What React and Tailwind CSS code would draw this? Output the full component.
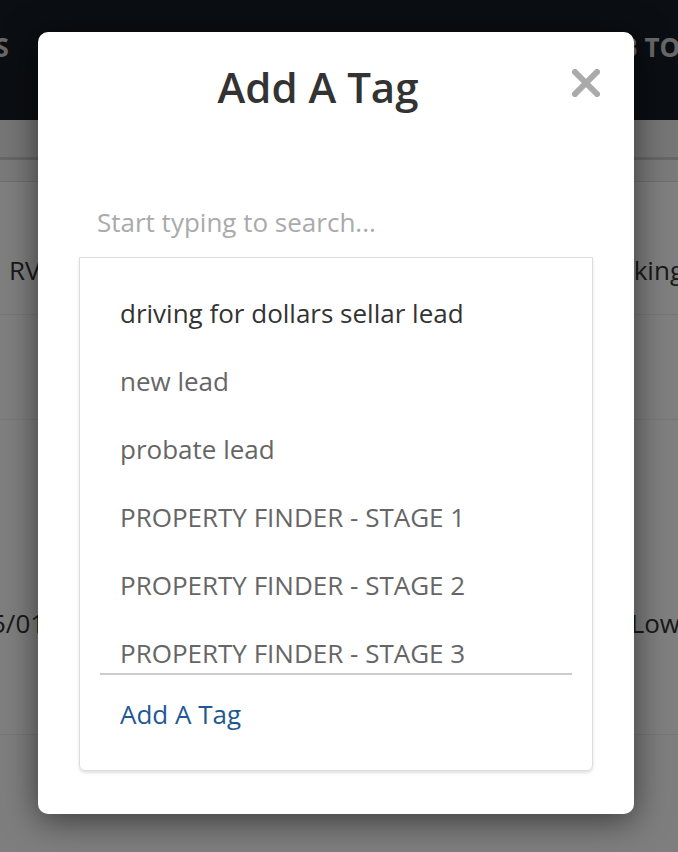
const TAGS = [
  'driving for dollars sellar lead',
  'new lead',
  'probate lead',
  'PROPERTY FINDER - STAGE 1',
  'PROPERTY FINDER - STAGE 2',
  'PROPERTY FINDER - STAGE 3',
  'PROPERTY FINDER - STAGE 4',
]

function CloseIcon() {
  return (
    <svg width="28" height="28" viewBox="0 0 28 28" className="block">
      <path d="M3 3 L25 25 M25 3 L3 25" stroke="#aaaaaa" strokeWidth="6" strokeLinecap="square" />
    </svg>
  )
}

function Background() {
  return (
    <div className="flex h-full flex-col bg-white text-[#333]">
      {/* top nav */}
      <div className="flex h-[120px] items-start justify-between bg-[#171c25] pt-[28px] text-[26px] font-bold text-[#d0d0d0]">
        <span className="-ml-[72px]">LEADS</span>
        <span className="-mr-[52px]">JOB TOOLS</span>
      </div>
      <div className="h-[37px] bg-[#ececec]" />
      <div className="h-[3px] bg-[#cfcfcf]" />
      <div className="h-[22px] border-b border-[#dedede] bg-[#f4f4f4]" />
      {/* table rows */}
      <div className="flex h-[133px] items-start justify-between border-b border-[#eeeeee] pt-[69px] text-[26px]">
        <span className="ml-[9px]">RV</span>
        <span className="-mr-[6px]">Parking</span>
      </div>
      <div className="h-[105px] border-b border-[#eeeeee]" />
      <div className="flex h-[315px] items-start justify-between border-b border-[#eeeeee] pt-[184px] text-[26px]">
        <span className="-ml-[9px]">5/01</span>
        <span className="-mr-[2px]">Low</span>
      </div>
      <div className="flex-1 bg-[#fcfcfc]" />
    </div>
  )
}

export default function App() {
  return (
    <div className="relative h-[852px] w-full overflow-hidden" style={{ fontFamily: '"Open Sans", "Liberation Sans", sans-serif' }}>
      <Background />
      <div className="absolute inset-0 bg-black/50" />

      {/* modal */}
      <div className="absolute left-[38px] top-[32px] flex h-[782px] w-[596px] flex-col rounded-[10px] bg-white px-[41px] pt-[31px] shadow-[0_6px_34px_rgba(0,0,0,0.55)]">
        <div className="relative">
          <h2 className="pr-[36px] text-center text-[42px] leading-[48px] font-semibold text-[#333]">Add A Tag</h2>
          <button className="absolute -right-[7px] top-[6px]">
            <CloseIcon />
          </button>
        </div>

        <input
          type="text"
          placeholder="Start typing to search..."
          className="mt-[84px] h-[62px] w-full pb-[8px] pl-[18px] text-[26px] text-[#333] placeholder-[#aaaaaa] outline-none"
        />

        <div className="rounded-b-[6px] border-[1.5px] border-[#dddddd] shadow-[0_2px_3px_rgba(0,0,0,0.12)]">
          <div className="h-[415px] overflow-hidden pt-[21px]">
            {TAGS.map((tag, i) => (
              <div
                key={tag}
                className={`flex h-[68px] items-center pl-[40px] text-[26px] ${i === 0 ? 'text-[#333]' : 'text-[#666]'}`}
              >
                {tag}
              </div>
            ))}
          </div>
          <div className="mx-[20px] h-[2px] bg-[#cccccc]" />
          <div className="pb-[36px] pl-[40px] pt-[19px] text-[26px] leading-[40px] text-[#1f5894]">Add A Tag</div>
        </div>
      </div>
    </div>
  )
}
